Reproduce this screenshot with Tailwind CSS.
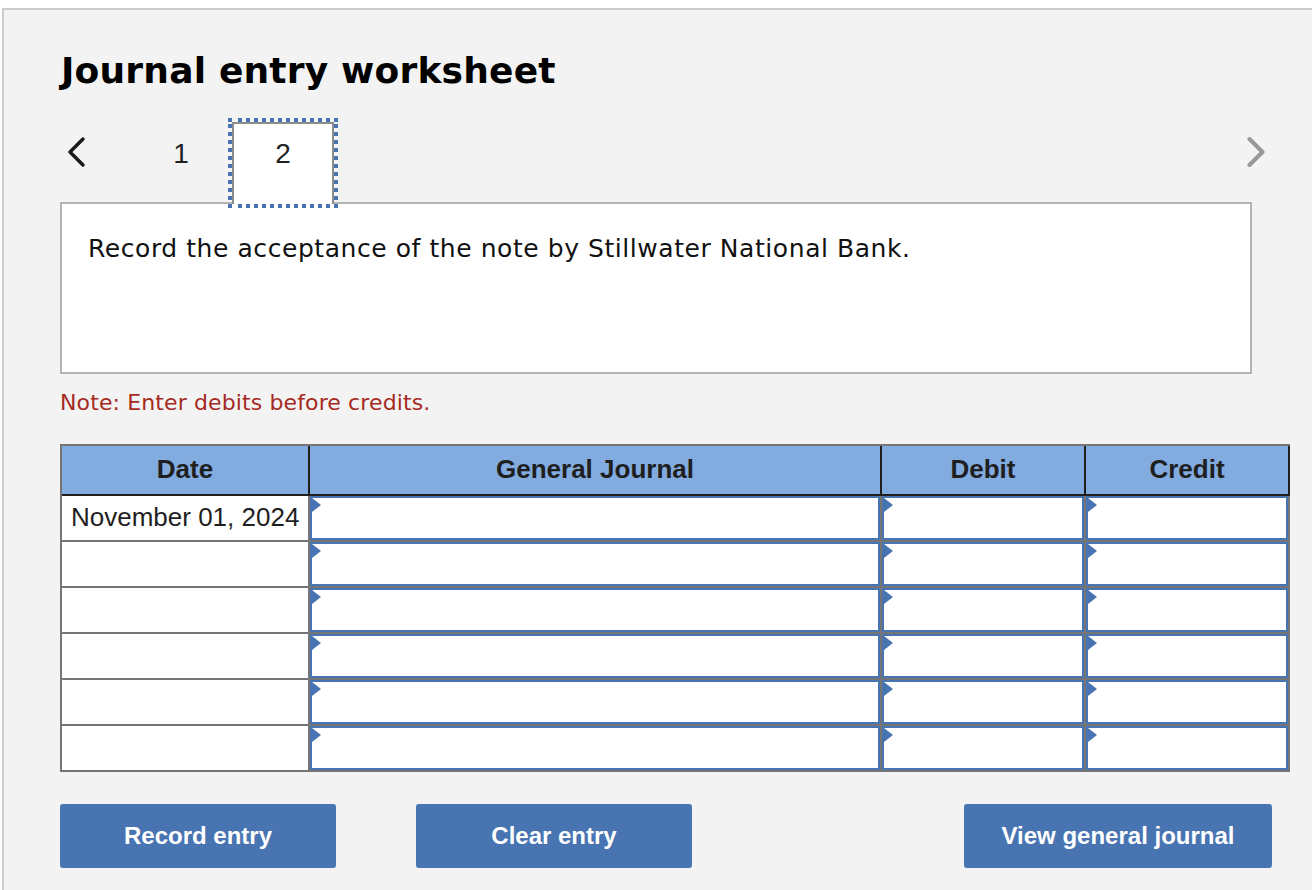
<!DOCTYPE html>
<html><head><meta charset="utf-8"><script src="https://cdn.jsdelivr.net/npm/@tailwindcss/browser@4"></script></head>
<body class="bg-white overflow-hidden">
<div class="ml-[2px] mt-[8px] h-[882px] w-[1310px] border-l-2 border-t-2 border-[#cccccc] bg-[#f3f3f3] pl-[56px] font-['DejaVu_Sans',sans-serif]">
  <h1 class="ml-[1px] pt-[36px] h-[108px] text-[36px] leading-[50px] tracking-[0.2px] font-bold text-black">Journal entry worksheet</h1>
  <div class="relative z-10 flex h-[84px] w-[1204px] items-start font-['Liberation_Sans',sans-serif] text-[28px] text-[#1f1f1f]">
    <svg class="mt-[17px] ml-[6px] h-[34px] w-[20px]" viewBox="0 0 20 34" fill="none" stroke="#1a1a1a" stroke-width="3.5" stroke-linecap="round" stroke-linejoin="round"><path d="M17 4 L4 17 L17 30"/></svg>
    <div class="ml-[45px] h-[84px] w-[100px] pt-[20px] text-center leading-[32px]">1</div>
    <div class="relative ml-[1px] mt-[4px] h-[82px] w-[102px] border-2 border-b-0 border-[#8c8c8c] bg-white pt-[14px] text-center leading-[32px]">2
      <svg class="absolute left-[-6px] top-[-6px] h-[90px] w-[110px]" viewBox="0 0 110 90" fill="none" stroke="#4874b2" stroke-width="4" stroke-dasharray="4 4"><path d="M10 2H110M10 88H110M2 6V90M108 6V90"/><rect x="0" y="0" width="4" height="4" fill="#4874b2" stroke="none"/></svg>
    </div>
    <svg class="absolute right-[-3px] top-[17px] h-[34px] w-[20px]" viewBox="0 0 20 34" fill="none" stroke="#999999" stroke-width="4" stroke-linecap="round" stroke-linejoin="round"><path d="M2.5 4 L15.5 17 L2.5 30"/></svg>
  </div>
  <div class="h-[172px] w-[1192px] border-2 border-[#b3b3b3] bg-white px-[26px] pt-[27px] text-[25px] leading-[36px] tracking-[0.56px] text-[#111111]">Record the acceptance of the note by Stillwater National Bank.</div>
  <p class="mt-[13px] h-[57px] text-[22px] leading-[32px] tracking-[0.12px] text-[#a52a22]">Note: Enter debits before credits.</p>
  <div class="grid w-[1230px] grid-cols-[248px_572px_204px_204px] border-l-2 border-t-2 border-[#757575] font-['Liberation_Sans',sans-serif] text-[#1f1f1f]">
    <div class="flex h-[50px] items-center justify-center border-b-2 border-r-2 border-[#1f1f1f] bg-[#82abe0] pb-[2px] text-[26px] font-bold">Date</div>
    <div class="flex h-[50px] items-center justify-center border-b-2 border-r-2 border-[#1f1f1f] bg-[#82abe0] pb-[2px] text-[26px] font-bold">General Journal</div>
    <div class="flex h-[50px] items-center justify-center border-b-2 border-r-2 border-[#1f1f1f] bg-[#82abe0] pb-[2px] text-[26px] font-bold">Debit</div>
    <div class="flex h-[50px] items-center justify-center border-b-2 border-r-2 border-[#1f1f1f] bg-[#82abe0] pb-[2px] text-[26px] font-bold">Credit</div>

    <div class="flex h-[46px] items-center border-b-2 border-r-2 border-[#757575] bg-white pb-[2px] pl-[9px] text-[26px] whitespace-nowrap">November 01, 2024</div>
    <div class="h-[46px] border-b-2 border-r-2 border-[#757575]"><div class="relative h-full border-2 border-[#4874b2] bg-white"><span class="absolute left-0 top-0 border-y-[7px] border-l-[9px] border-y-transparent border-l-[#4874b2]"></span></div></div>
    <div class="h-[46px] border-b-2 border-r-2 border-[#757575]"><div class="relative h-full border-2 border-[#4874b2] bg-white"><span class="absolute left-0 top-0 border-y-[7px] border-l-[9px] border-y-transparent border-l-[#4874b2]"></span></div></div>
    <div class="h-[46px] border-b-2 border-r-2 border-[#757575]"><div class="relative h-full border-2 border-[#4874b2] bg-white"><span class="absolute left-0 top-0 border-y-[7px] border-l-[9px] border-y-transparent border-l-[#4874b2]"></span></div></div>

    <div class="h-[46px] border-b-2 border-r-2 border-[#757575] bg-white"></div>
    <div class="h-[46px] border-b-2 border-r-2 border-[#757575]"><div class="relative h-full border-2 border-[#4874b2] bg-white"><span class="absolute left-0 top-0 border-y-[7px] border-l-[9px] border-y-transparent border-l-[#4874b2]"></span></div></div>
    <div class="h-[46px] border-b-2 border-r-2 border-[#757575]"><div class="relative h-full border-2 border-[#4874b2] bg-white"><span class="absolute left-0 top-0 border-y-[7px] border-l-[9px] border-y-transparent border-l-[#4874b2]"></span></div></div>
    <div class="h-[46px] border-b-2 border-r-2 border-[#757575]"><div class="relative h-full border-2 border-[#4874b2] bg-white"><span class="absolute left-0 top-0 border-y-[7px] border-l-[9px] border-y-transparent border-l-[#4874b2]"></span></div></div>

    <div class="h-[46px] border-b-2 border-r-2 border-[#757575] bg-white"></div>
    <div class="h-[46px] border-b-2 border-r-2 border-[#757575]"><div class="relative h-full border-2 border-[#4874b2] bg-white"><span class="absolute left-0 top-0 border-y-[7px] border-l-[9px] border-y-transparent border-l-[#4874b2]"></span></div></div>
    <div class="h-[46px] border-b-2 border-r-2 border-[#757575]"><div class="relative h-full border-2 border-[#4874b2] bg-white"><span class="absolute left-0 top-0 border-y-[7px] border-l-[9px] border-y-transparent border-l-[#4874b2]"></span></div></div>
    <div class="h-[46px] border-b-2 border-r-2 border-[#757575]"><div class="relative h-full border-2 border-[#4874b2] bg-white"><span class="absolute left-0 top-0 border-y-[7px] border-l-[9px] border-y-transparent border-l-[#4874b2]"></span></div></div>

    <div class="h-[46px] border-b-2 border-r-2 border-[#757575] bg-white"></div>
    <div class="h-[46px] border-b-2 border-r-2 border-[#757575]"><div class="relative h-full border-2 border-[#4874b2] bg-white"><span class="absolute left-0 top-0 border-y-[7px] border-l-[9px] border-y-transparent border-l-[#4874b2]"></span></div></div>
    <div class="h-[46px] border-b-2 border-r-2 border-[#757575]"><div class="relative h-full border-2 border-[#4874b2] bg-white"><span class="absolute left-0 top-0 border-y-[7px] border-l-[9px] border-y-transparent border-l-[#4874b2]"></span></div></div>
    <div class="h-[46px] border-b-2 border-r-2 border-[#757575]"><div class="relative h-full border-2 border-[#4874b2] bg-white"><span class="absolute left-0 top-0 border-y-[7px] border-l-[9px] border-y-transparent border-l-[#4874b2]"></span></div></div>

    <div class="h-[46px] border-b-2 border-r-2 border-[#757575] bg-white"></div>
    <div class="h-[46px] border-b-2 border-r-2 border-[#757575]"><div class="relative h-full border-2 border-[#4874b2] bg-white"><span class="absolute left-0 top-0 border-y-[7px] border-l-[9px] border-y-transparent border-l-[#4874b2]"></span></div></div>
    <div class="h-[46px] border-b-2 border-r-2 border-[#757575]"><div class="relative h-full border-2 border-[#4874b2] bg-white"><span class="absolute left-0 top-0 border-y-[7px] border-l-[9px] border-y-transparent border-l-[#4874b2]"></span></div></div>
    <div class="h-[46px] border-b-2 border-r-2 border-[#757575]"><div class="relative h-full border-2 border-[#4874b2] bg-white"><span class="absolute left-0 top-0 border-y-[7px] border-l-[9px] border-y-transparent border-l-[#4874b2]"></span></div></div>

    <div class="h-[46px] border-b-2 border-r-2 border-[#757575] bg-white"></div>
    <div class="h-[46px] border-b-2 border-r-2 border-[#757575]"><div class="relative h-full border-2 border-[#4874b2] bg-white"><span class="absolute left-0 top-0 border-y-[7px] border-l-[9px] border-y-transparent border-l-[#4874b2]"></span></div></div>
    <div class="h-[46px] border-b-2 border-r-2 border-[#757575]"><div class="relative h-full border-2 border-[#4874b2] bg-white"><span class="absolute left-0 top-0 border-y-[7px] border-l-[9px] border-y-transparent border-l-[#4874b2]"></span></div></div>
    <div class="h-[46px] border-b-2 border-r-2 border-[#757575]"><div class="relative h-full border-2 border-[#4874b2] bg-white"><span class="absolute left-0 top-0 border-y-[7px] border-l-[9px] border-y-transparent border-l-[#4874b2]"></span></div></div>
  </div>
  <div class="mt-[32px] flex font-['Liberation_Sans',sans-serif] text-[24px] font-bold text-white">
    <button class="h-[64px] w-[276px] rounded-[3px] bg-[#4874b2]">Record entry</button>
    <button class="ml-[80px] h-[64px] w-[276px] rounded-[3px] bg-[#4874b2]">Clear entry</button>
    <button class="ml-[272px] h-[64px] w-[308px] rounded-[3px] bg-[#4874b2]">View general journal</button>
  </div>
</div>
</body></html>
